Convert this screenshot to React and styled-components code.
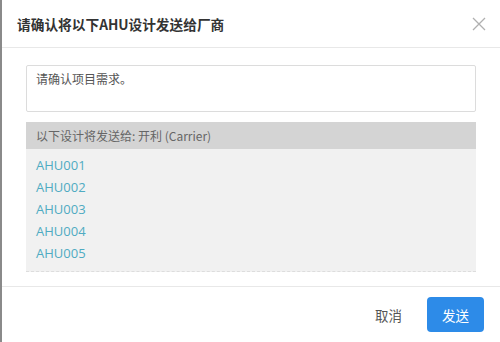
import styled, { createGlobalStyle } from "styled-components";

const Global = createGlobalStyle`
  html, body {
    margin: 0;
    padding: 0;
    background: #ffffff;
  }
  body {
    font-family: "Open Sans", "Noto Sans CJK SC", sans-serif;
  }
`;

const Dialog = styled.div`
  width: 500px;
  height: 342px;
  box-sizing: border-box;
  border-left: 2px solid #8a8a8a;
  display: flex;
  flex-direction: column;
  background: #fff;
`;

const Header = styled.div`
  height: 48px;
  box-sizing: border-box;
  padding: 0 14px 0 15px;
  border-bottom: 1px solid #e8e8e8;
  display: flex;
  align-items: center;
  justify-content: space-between;
`;

const Title = styled.div`
  font-family: "Noto Sans CJK SC", sans-serif;
  font-size: 13.7px;
  font-weight: 700;
  color: #333;
`;

const Close = styled.button`
  border: 0;
  background: none;
  padding: 0;
  width: 14px;
  height: 14px;
  display: flex;
  cursor: pointer;
`;

const Body = styled.div`
  flex: 1;
  padding: 17px 24px 0 24px;
  display: flex;
  flex-direction: column;
`;

const Note = styled.div`
  height: 47px;
  box-sizing: border-box;
  border: 1px solid #dcdcdc;
  border-radius: 2px;
  padding: 4px 9px;
  font-family: "Noto Sans CJK SC", sans-serif;
  font-size: 12px;
  color: #555;
`;

const Target = styled.div`
  margin-top: 10px;
  height: 27px;
  background: #d4d4d4;
  padding-left: 10px;
  display: flex;
  align-items: center;
  font-family: "Noto Sans CJK SC", sans-serif;
  font-size: 12px;
  color: #666;
`;

const List = styled.ul`
  list-style: none;
  margin: 0;
  padding: 5px 10px 7px;
  background: #f1f1f1;
  border-bottom: 1px dashed #dddddd;
`;

const Item = styled.li`
  font-size: 13px;
  line-height: 22px;
  color: #4fabc2;
`;

const Footer = styled.div`
  height: 56px;
  box-sizing: border-box;
  border-top: 1px solid #e8e8e8;
  padding: 0 16px 0 0;
  display: flex;
  align-items: center;
  justify-content: flex-end;
  gap: 23px;
`;

const Button = styled.button`
  font-family: "Noto Sans CJK SC", sans-serif;
  font-size: 13.5px;
  height: 35px;
  padding: 0 ${(p) => (p.$primary ? "15px" : "2px")};
  min-width: ${(p) => (p.$primary ? "57px" : "0")};
  border: 0;
  border-radius: 4px;
  background: ${(p) => (p.$primary ? "#2d8be8" : "transparent")};
  color: ${(p) => (p.$primary ? "#fff" : "#555")};
  cursor: pointer;
`;

const units = ["AHU001", "AHU002", "AHU003", "AHU004", "AHU005"];

export default function App() {
  return (
    <>
      <Global />
      <Dialog>
        <Header>
          <Title>请确认将以下AHU设计发送给厂商</Title>
          <Close aria-label="close">
            <svg width="14" height="14" viewBox="0 0 14 14">
              <path d="M1 1L13 13M13 1L1 13" stroke="#b0b0b0" strokeWidth="1.3" />
            </svg>
          </Close>
        </Header>
        <Body>
          <Note>请确认项目需求。</Note>
          <Target>以下设计将发送给: 开利 (Carrier)</Target>
          <List>
            {units.map((u) => (
              <Item key={u}>{u}</Item>
            ))}
          </List>
        </Body>
        <Footer>
          <Button>取消</Button>
          <Button $primary>发送</Button>
        </Footer>
      </Dialog>
    </>
  );
}
